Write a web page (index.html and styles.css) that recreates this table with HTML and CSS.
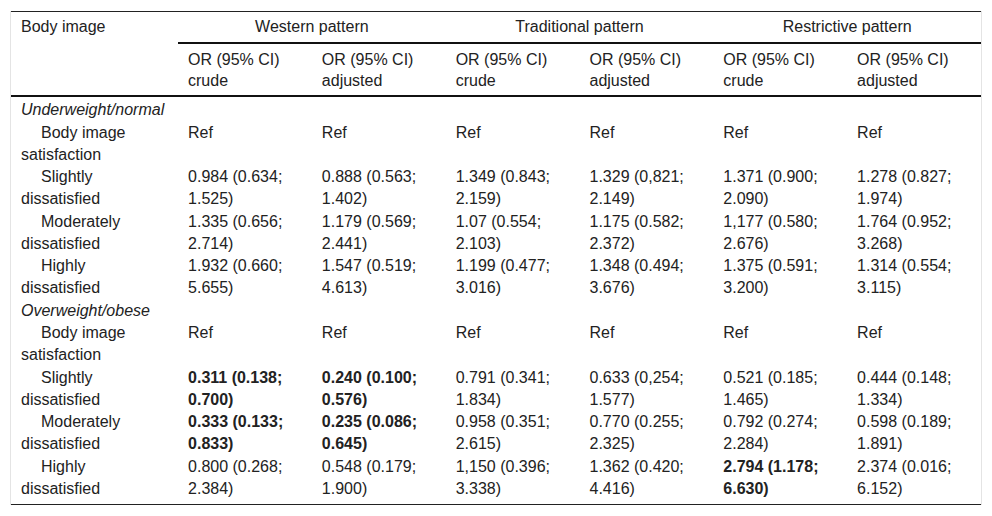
FILE: index.html
```html
<!DOCTYPE html>
<html>
<head>
<meta charset="utf-8">
<link rel="stylesheet" href="styles.css">
</head>
<body>
<div class="wrap">
<table class="tbl">
<colgroup>
<col class="c0"><col class="cd"><col class="cd"><col class="cd"><col class="cd"><col class="cd"><col class="cd">
</colgroup>
<thead>
<tr class="h1">
<th rowspan="2" class="first">Body image</th>
<th colspan="2" class="grp">Western pattern</th>
<th colspan="2" class="grp">Traditional pattern</th>
<th colspan="2" class="grp">Restrictive pattern</th>
</tr>
<tr class="h2">
<th>OR (95% CI)<br>crude</th>
<th>OR (95% CI)<br>adjusted</th>
<th>OR (95% CI)<br>crude</th>
<th>OR (95% CI)<br>adjusted</th>
<th>OR (95% CI)<br>crude</th>
<th>OR (95% CI)<br>adjusted</th>
</tr>
</thead>
<tbody>
<tr class="top"><td colspan="7" class="sec">Underweight/normal</td></tr>
<tr><td class="lbl">Body image satisfaction</td><td>Ref</td><td>Ref</td><td>Ref</td><td>Ref</td><td>Ref</td><td>Ref</td></tr>
<tr><td class="lbl">Slightly dissatisfied</td><td>0.984 (0.634; 1.525)</td><td>0.888 (0.563; 1.402)</td><td>1.349 (0.843; 2.159)</td><td>1.329 (0,821; 2.149)</td><td>1.371 (0.900; 2.090)</td><td>1.278 (0.827; 1.974)</td></tr>
<tr><td class="lbl">Moderately dissatisfied</td><td>1.335 (0.656; 2.714)</td><td>1.179 (0.569; 2.441)</td><td>1.07 (0.554; 2.103)</td><td>1.175 (0.582; 2.372)</td><td>1,177 (0.580; 2.676)</td><td>1.764 (0.952; 3.268)</td></tr>
<tr><td class="lbl">Highly dissatisfied</td><td>1.932 (0.660; 5.655)</td><td>1.547 (0.519; 4.613)</td><td>1.199 (0.477; 3.016)</td><td>1.348 (0.494; 3.676)</td><td>1.375 (0.591; 3.200)</td><td>1.314 (0.554; 3.115)</td></tr>
<tr><td colspan="7" class="sec">Overweight/obese</td></tr>
<tr><td class="lbl">Body image satisfaction</td><td>Ref</td><td>Ref</td><td>Ref</td><td>Ref</td><td>Ref</td><td>Ref</td></tr>
<tr><td class="lbl">Slightly dissatisfied</td><td><b>0.311 (0.138; 0.700)</b></td><td><b>0.240 (0.100; 0.576)</b></td><td>0.791 (0.341; 1.834)</td><td>0.633 (0,254; 1.577)</td><td>0.521 (0.185; 1.465)</td><td>0.444 (0.148; 1.334)</td></tr>
<tr><td class="lbl">Moderately dissatisfied</td><td><b>0.333 (0.133; 0.833)</b></td><td><b>0.235 (0.086; 0.645)</b></td><td>0.958 (0.351; 2.615)</td><td>0.770 (0.255; 2.325)</td><td>0.792 (0.274; 2.284)</td><td>0.598 (0.189; 1.891)</td></tr>
<tr class="last"><td class="lbl">Highly dissatisfied</td><td>0.800 (0.268; 2.384)</td><td>0.548 (0.179; 1.900)</td><td>1,150 (0.396; 3.338)</td><td>1.362 (0.420; 4.416)</td><td><b>2.794 (1.178; 6.630)</b></td><td>2.374 (0.016; 6.152)</td></tr>
</tbody>
</table>
</div>
</body>
</html>
```

FILE: styles.css
```css
html, body {
  margin: 0;
  padding: 0;
  background: #fff;
}
body {
  font-family: "Liberation Sans", Arial, sans-serif;
  font-size: 16px;
  color: #222;
}
.wrap {
  margin: 11px 0 0 10px;
  width: 970px;
  border-left: 1px solid #e4e4e4;
  border-right: 1px solid #e4e4e4;
}
.tbl {
  width: 970px;
  border-collapse: collapse;
  table-layout: fixed;
}
.c0 { width: 167px; }
.cd { width: 133.8px; }
.tbl th {
  font-weight: normal;
  text-align: left;
  vertical-align: top;
  line-height: 21px;
  padding: 4px 10px 5px;
}
.h1 th {
  border-top: 1px solid #222;
}
.h1 th.grp {
  text-align: center;
  border-bottom: 2px solid #111;
}
.h2 th {
  padding: 5px 10px 4px;
}
.tbl thead th.first,
.h2 th {
  border-bottom: 2px solid #111;
}
.tbl td {
  vertical-align: top;
  line-height: 22px;
  padding: 0.5px 10px 0;
}
.tbl tr.top td {
  padding-top: 2px;
}
.tbl td.sec {
  font-style: italic;
}
.tbl td.lbl {
  text-indent: 20px;
}
.tbl td b {
  font-weight: bold;
}
.tbl tr.last td {
  border-bottom: 1px solid #222;
  padding-bottom: 4.5px;
}
```
